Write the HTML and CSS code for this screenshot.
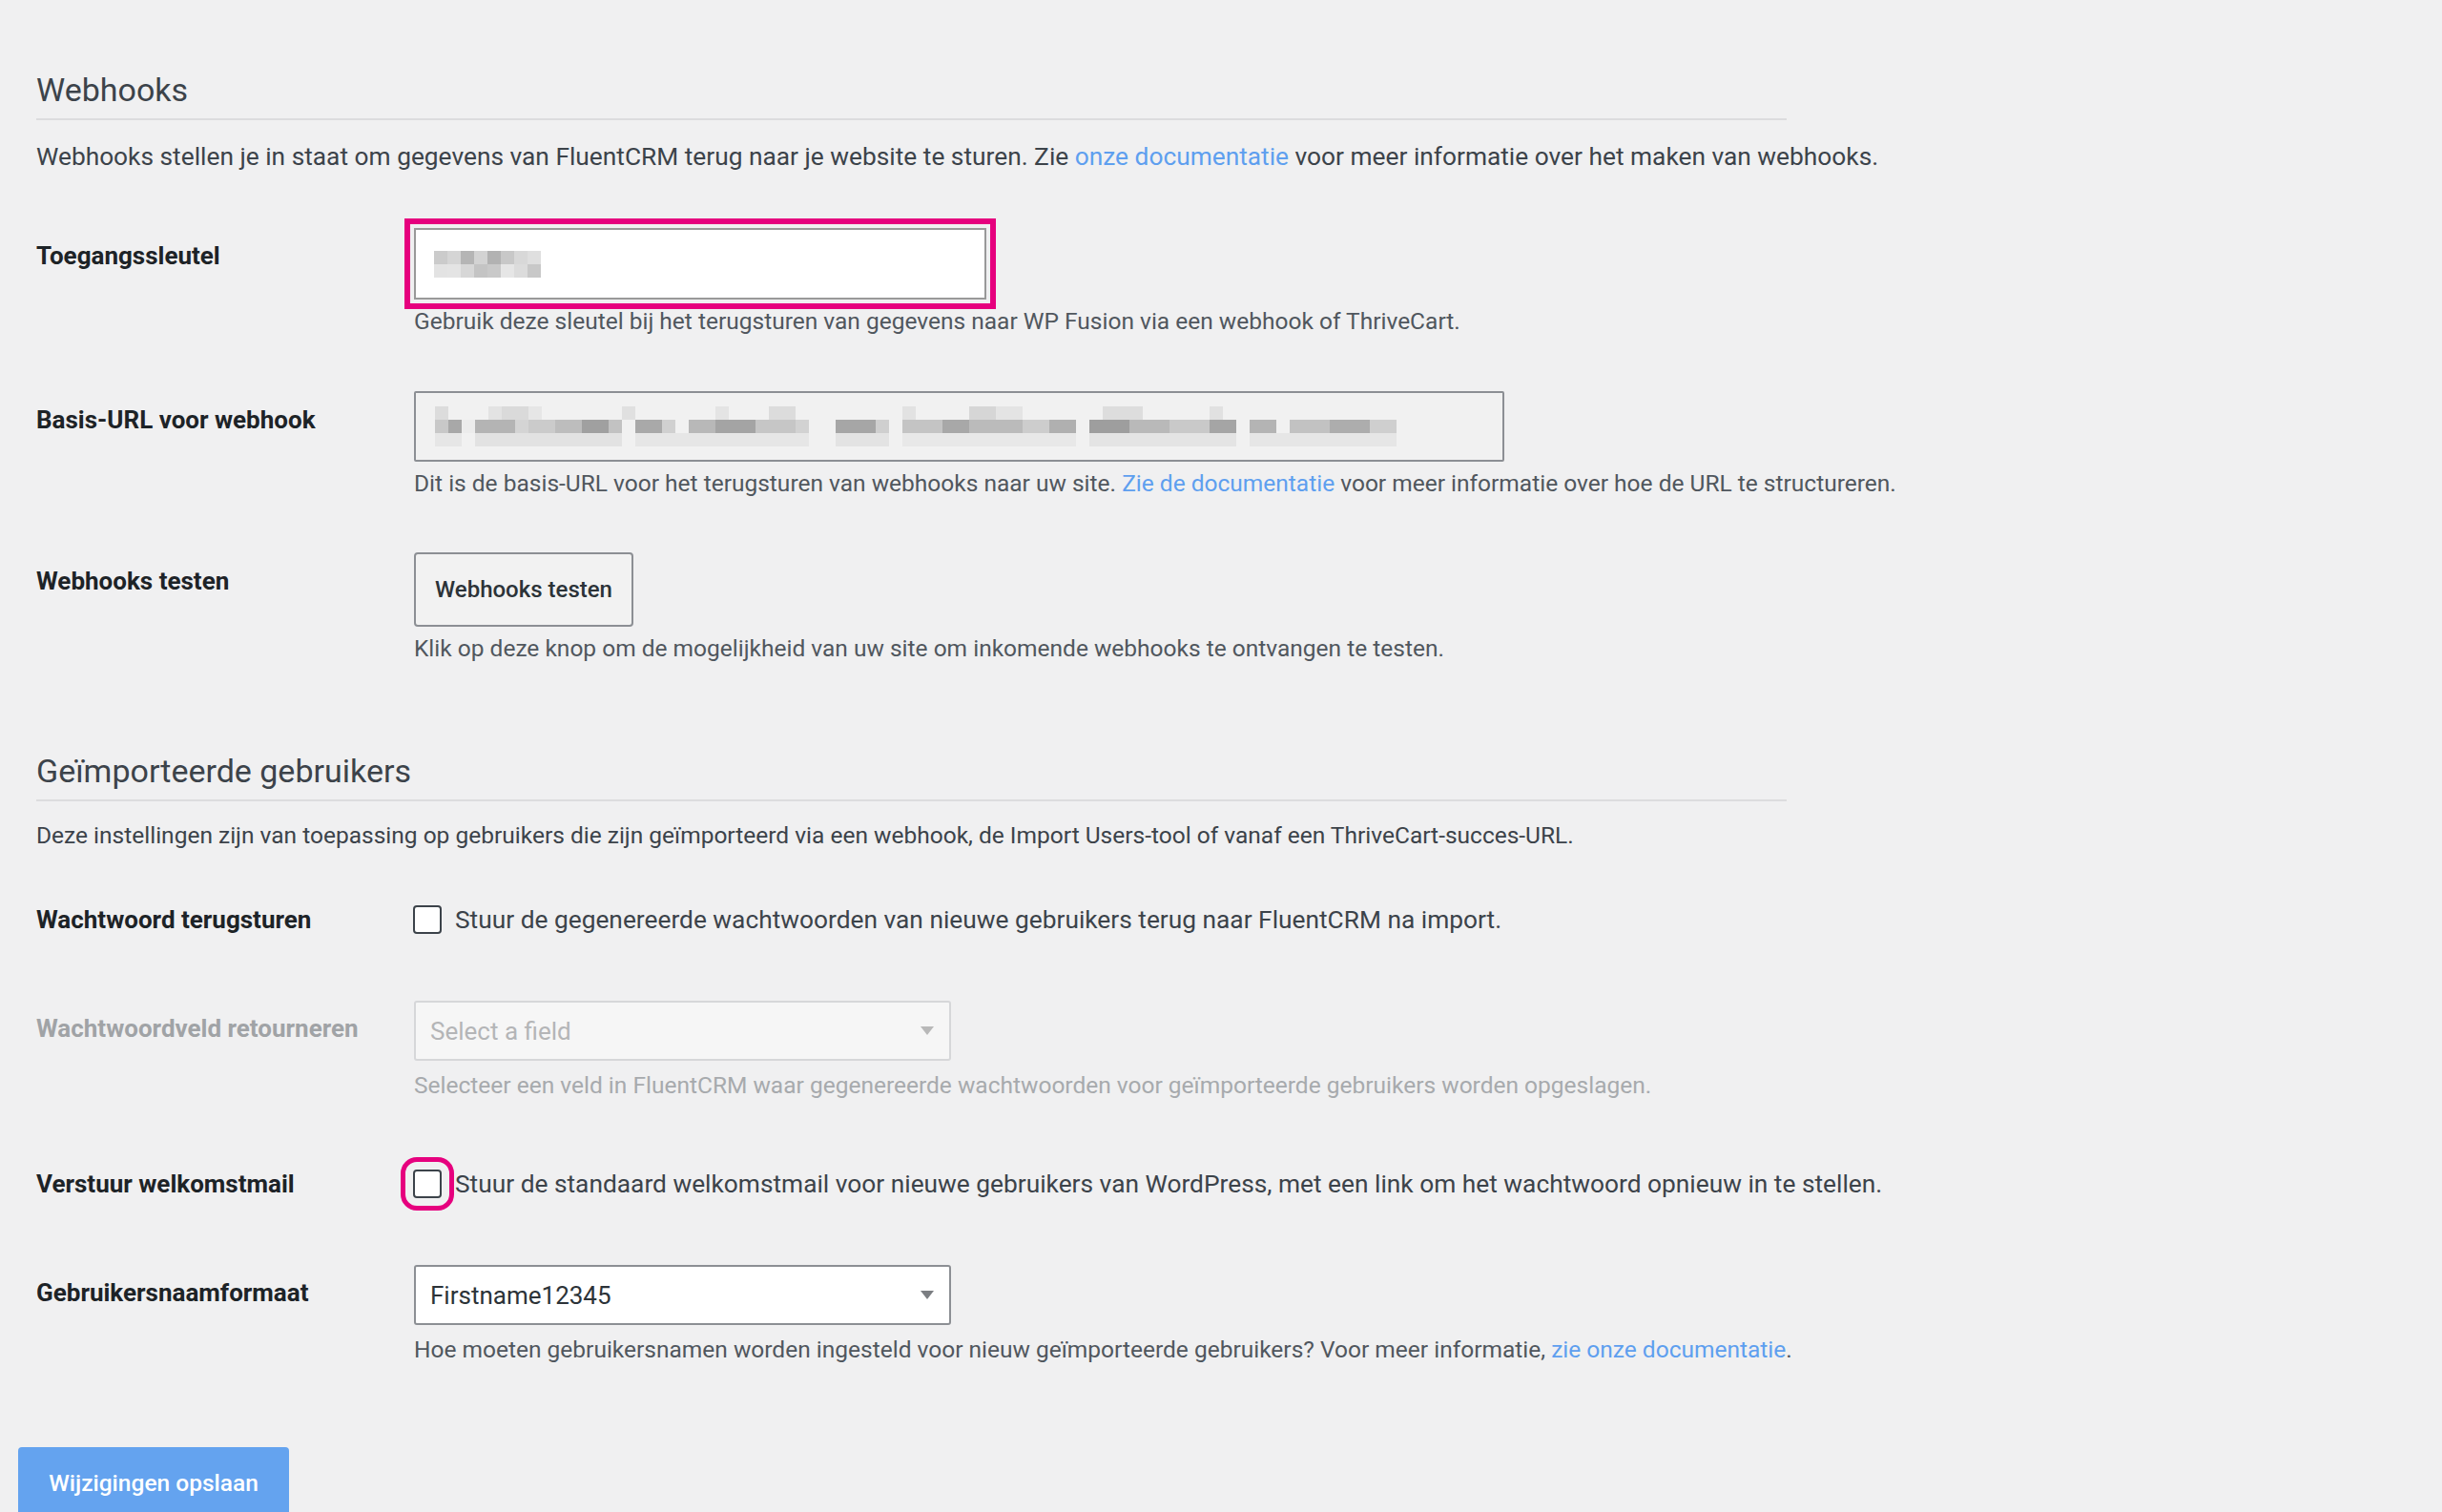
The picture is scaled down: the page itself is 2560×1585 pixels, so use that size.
FILE: index.html
```html
<!DOCTYPE html>
<html lang="nl">
<head>
<meta charset="utf-8">
<title>Webhooks instellingen</title>
<link rel="stylesheet" href="styles.css">
</head>
<body>
<main class="page">
  <div class="settings">
    <h2 class="section-title">Webhooks</h2>
    <p class="intro">Webhooks stellen je in staat om gegevens van FluentCRM terug naar je website te sturen. Zie <a class="link" href="#">onze documentatie</a> voor meer informatie over het maken van webhooks.</p>

    <div class="row row--first">
      <div class="label label--first">Toegangssleutel</div>
      <div class="field">
        <div class="input input--key highlight">
          <div class="blur blur--key"><span class="b-row k1"></span><span class="b-row k2"></span></div>
        </div>
        <p class="desc">Gebruik deze sleutel bij het terugsturen van gegevens naar WP Fusion via een webhook of ThriveCart.</p>
      </div>
    </div>

    <div class="row row--url">
      <div class="label label--url">Basis-URL voor webhook</div>
      <div class="field">
        <div class="input input--url">
          <div class="blur blur--url"><span class="b-row u1"></span><span class="b-row u2"></span><span class="b-row u3"></span></div>
        </div>
        <p class="desc">Dit is de basis-URL voor het terugsturen van webhooks naar uw site. <a class="link" href="#">Zie de documentatie</a> voor meer informatie over hoe de URL te structureren.</p>
      </div>
    </div>

    <div class="row row--test">
      <div class="label label--btn">Webhooks testen</div>
      <div class="field">
        <button class="btn-secondary" type="button">Webhooks testen</button>
        <p class="desc">Klik op deze knop om de mogelijkheid van uw site om inkomende webhooks te ontvangen te testen.</p>
      </div>
    </div>

    <h2 class="section-title section-title--second">Geïmporteerde gebruikers</h2>
    <p class="intro intro--small">Deze instellingen zijn van toepassing op gebruikers die zijn geïmporteerd via een webhook, de Import Users-tool of vanaf een ThriveCart-succes-URL.</p>

    <div class="row row--check-first">
      <div class="label label--flush">Wachtwoord terugsturen</div>
      <div class="field">
        <label class="check-line"><input class="cb" type="checkbox"><span>Stuur de gegenereerde wachtwoorden van nieuwe gebruikers terug naar FluentCRM na import.</span></label>
      </div>
    </div>

    <div class="row row--select">
      <div class="label label--select label--disabled">Wachtwoordveld retourneren</div>
      <div class="field">
        <div class="select select--disabled"><span>Select a field</span><span class="caret"></span></div>
        <p class="desc desc--after-select desc--disabled">Selecteer een veld in FluentCRM waar gegenereerde wachtwoorden voor geïmporteerde gebruikers worden opgeslagen.</p>
      </div>
    </div>

    <div class="row row--check">
      <div class="label label--flush">Verstuur welkomstmail</div>
      <div class="field">
        <label class="check-line"><input class="cb cb--highlight" type="checkbox"><span>Stuur de standaard welkomstmail voor nieuwe gebruikers van WordPress, met een link om het wachtwoord opnieuw in te stellen.</span></label>
      </div>
    </div>

    <div class="row row--select">
      <div class="label label--select">Gebruikersnaamformaat</div>
      <div class="field">
        <div class="select"><span>Firstname12345</span><span class="caret"></span></div>
        <p class="desc desc--after-select">Hoe moeten gebruikersnamen worden ingesteld voor nieuw geïmporteerde gebruikers? Voor meer informatie, <a class="link" href="#">zie onze documentatie</a>.</p>
      </div>
    </div>
  </div>

  <button class="btn-primary" type="button">Wijzigingen opslaan</button>
</main>
</body>
</html>
```

FILE: styles.css
```css
* {
  box-sizing: border-box;
}

html, body {
  margin: 0;
  background: #f0f0f1;
}

body {
  font-family: Roboto, "Noto Sans", "Liberation Sans", sans-serif;
  color: #3c434a;
  overflow: hidden;
  height: 1585px;
}

.page {
  padding: 74px 0 0 19px;
}

.settings {
  padding-left: 19px;
}

.section-title {
  margin: 0;
  width: 1835px;
  font-size: 34px;
  line-height: 40px;
  font-weight: 400;
  color: #3c434a;
  padding-bottom: 10px;
  border-bottom: 2px solid #dcdcde;
}

.section-title--second {
  margin-top: 91px;
}

.intro {
  margin: 20px 0 0;
  font-size: 26.3px;
  line-height: 36px;
  color: #3c434a;
}

.intro--small {
  margin-top: 19px;
  font-size: 24.5px;
  line-height: 34px;
}

.link {
  color: #5e9fef;
  text-decoration: none;
}

.row {
  display: flex;
  align-items: flex-start;
}

.row--first { margin-top: 57px; }
.row--url { margin-top: 56px; }
.row--test { margin-top: 55px; }
.row--check-first { margin-top: 53px; }
.row--select { margin-top: 67px; }
.row--check { margin-top: 68px; }

.label {
  flex: 0 0 396px;
  font-size: 26px;
  line-height: 36px;
  font-weight: 700;
  color: #1d2327;
  padding-top: 9px;
}

.label--first { padding-top: 11px; }
.label--url { padding-top: 12px; }
.label--btn { padding-top: 12px; }
.label--select { padding-top: 11px; }
.label--flush { padding-top: 0; }
.label--disabled { color: #a0a3a6; }

.field {
  flex: 1;
}

.desc {
  margin: 6px 0 0;
  font-size: 24.5px;
  line-height: 34px;
  color: #50575e;
}

.desc--after-select { margin-top: 9px; }
.desc--disabled { color: #a7aaad; }

.input {
  display: flex;
  align-items: center;
  border: 2px solid #8c8f94;
  border-radius: 2px;
}

.input--key {
  width: 600px;
  height: 75px;
  background: #fff;
  padding-left: 19px;
  border-color: #999;
  border-radius: 0;
}

.highlight {
  outline: 6px solid #e6007e;
  outline-offset: 4px;
}

.input--url {
  width: 1143px;
  height: 74px;
  background: #f1f1f1;
  padding-left: 20px;
}

.blur {
  display: flex;
  flex-direction: column;
}

.b-row {
  display: block;
  height: 14px;
}

.blur--key { width: 112px; }
.blur--url { width: 1008px; }

.k1 {
  background: linear-gradient(to right, #cbcbcb 0 14px, #d5d5d5 14px 28px, #b5b5b5 28px 42px, #d3d3d3 42px 56px, #b2b2b2 56px 70px, #c8c8c8 70px 84px, #d8d8d8 84px 98px, #dfdfdf 98px 112px);
}

.k2 {
  background: linear-gradient(to right, #e3e3e3 0 14px, #e4e4e4 14px 28px, #d7d7d7 28px 42px, #c4c4c4 42px 56px, #c9c9c9 56px 70px, #e6e6e6 70px 84px, #dcdcdc 84px 98px, #c8c8c8 98px 112px);
}

.u1 {
  background: linear-gradient(to right, #dcdcdc 0 14px, transparent 14px 56px, #e3e3e3 56px 70px, #dadada 70px 98px, #e6e6e6 98px 112px, transparent 112px 196px, #e0e0e0 196px 210px, transparent 210px 294px, #e4e4e4 294px 308px, transparent 308px 350px, #dcdcdc 350px 378px, transparent 378px 490px, #e2e2e2 490px 504px, transparent 504px 560px, #d6d6d6 560px 588px, #e4e4e4 588px 616px, transparent 616px 700px, #dddddd 700px 742px, transparent 742px 812px, #e1e1e1 812px 826px, transparent 826px 1008px);
}

.u2 {
  background: linear-gradient(to right, #c8c8c8 0 14px, #a8a8a8 14px 28px, #ececec 28px 42px, #b4b4b4 42px 84px, #d4d4d4 84px 98px, #cbcbcb 98px 126px, #bdbdbd 126px 154px, #a0a0a0 154px 182px, #c2c2c2 182px 196px, transparent 196px 210px, #a9a9a9 210px 238px, #d0d0d0 238px 252px, transparent 252px 266px, #b8b8b8 266px 294px, #a4a4a4 294px 336px, #c6c6c6 336px 378px, #d2d2d2 378px 392px, transparent 392px 420px, #a6a6a6 420px 462px, #cfcfcf 462px 476px, transparent 476px 490px, #c4c4c4 490px 532px, #a8a8a8 532px 560px, #bbbbbb 560px 616px, #cdcdcd 616px 644px, #b0b0b0 644px 672px, transparent 672px 686px, #9e9e9e 686px 728px, #b9b9b9 728px 770px, #c9c9c9 770px 812px, #a5a5a5 812px 840px, transparent 840px 854px, #b4b4b4 854px 882px, transparent 882px 896px, #c2c2c2 896px 938px, #adadad 938px 980px, #cfcfcf 980px 1008px);
}

.u3 {
  background: linear-gradient(to right, #e6e6e6 0 28px, transparent 28px 42px, #e2e2e2 42px 196px, transparent 196px 210px, #e6e6e6 210px 392px, transparent 392px 420px, #e3e3e3 420px 476px, transparent 476px 490px, #e8e8e8 490px 672px, transparent 672px 686px, #e4e4e4 686px 840px, transparent 840px 854px, #e6e6e6 854px 1008px);
}

.btn-secondary {
  display: block;
  width: 230px;
  height: 78px;
  border: 2px solid #8c8f94;
  border-radius: 4px;
  background: #f2f2f2;
  font-family: inherit;
  font-size: 24px;
  font-weight: 500;
  color: #2c3338;
  padding: 0;
}

.check-line {
  display: flex;
  align-items: center;
  gap: 14px;
  font-size: 26.3px;
  line-height: 36px;
  color: #3c434a;
}

.cb {
  appearance: none;
  -webkit-appearance: none;
  margin: 0 0 0 -1px;
  width: 30px;
  height: 30px;
  flex: 0 0 30px;
  border: 2px solid #3c434a;
  border-radius: 4px;
  background: #fff;
}

.cb--highlight {
  outline: 5px solid #e6007e;
  outline-offset: 8px;
}

.select {
  display: flex;
  align-items: center;
  justify-content: space-between;
  width: 563px;
  height: 63px;
  border: 2px solid #8c8f94;
  border-radius: 3px;
  background: #fff;
  padding: 0 16px 0 15px;
  font-size: 26px;
  color: #2c3338;
}

.select--disabled {
  background: #f6f6f6;
  border-color: #d6d7d9;
  color: #b4b5b7;
}

.caret {
  width: 0;
  height: 0;
  border-left: 7.5px solid transparent;
  border-right: 7.5px solid transparent;
  border-top: 9px solid #7b7e82;
}

.select--disabled .caret {
  border-top-color: #b8b8b8;
}

.btn-primary {
  display: block;
  margin-top: 85px;
  width: 284px;
  height: 74px;
  border: 0;
  border-radius: 4px;
  background: #64a3ef;
  color: #fff;
  font-family: inherit;
  font-size: 24.5px;
  font-weight: 500;
  padding: 0;
}
```
